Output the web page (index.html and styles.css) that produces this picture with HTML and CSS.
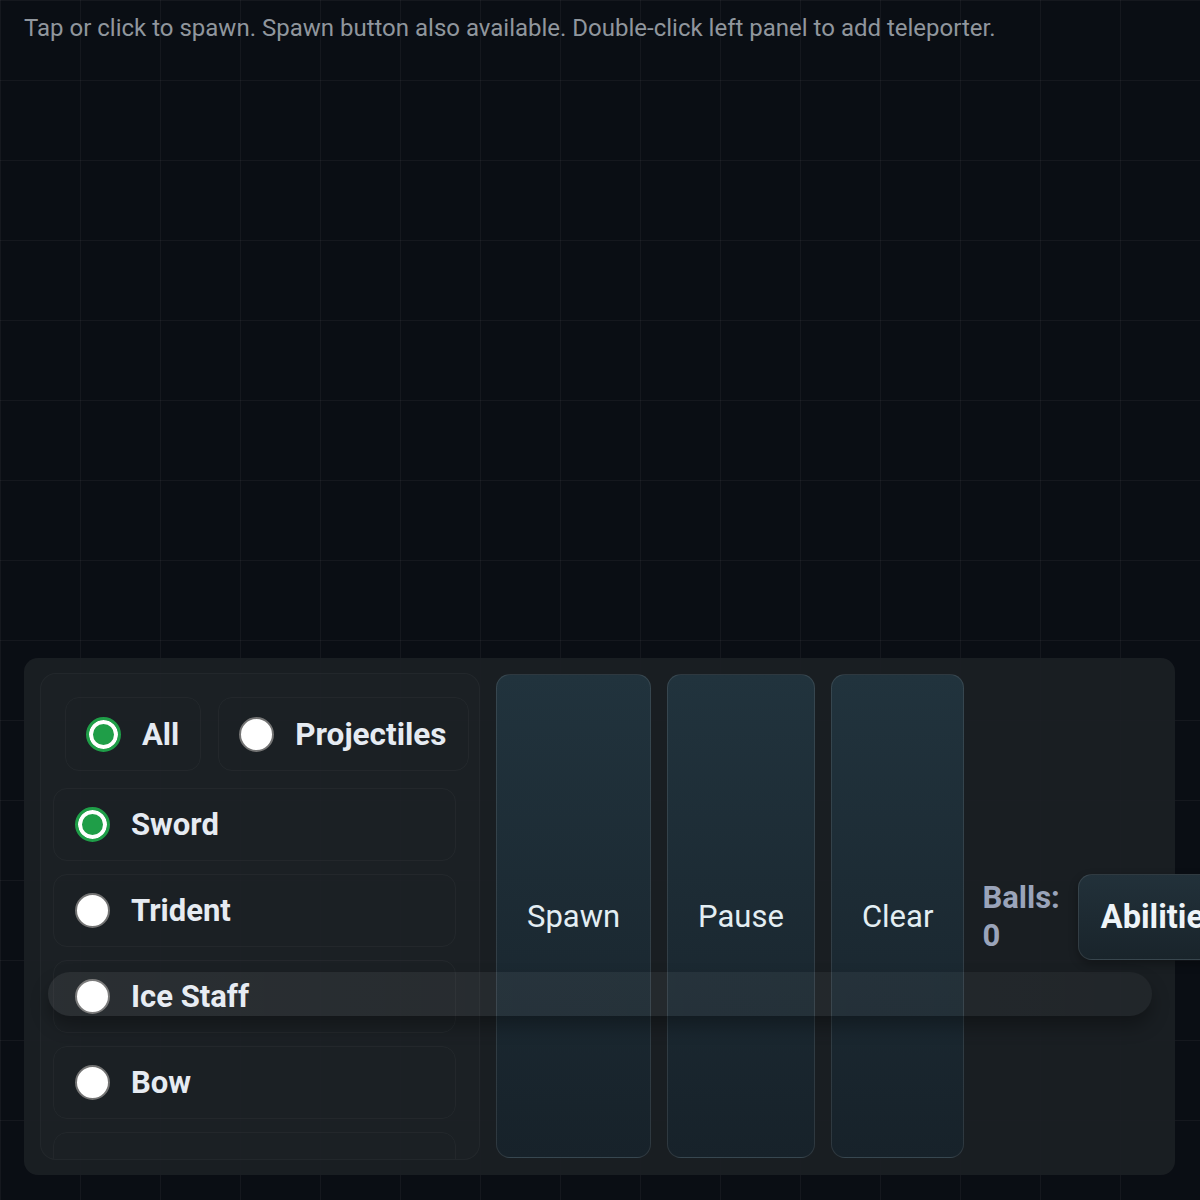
FILE: index.html
```html
<!DOCTYPE html>
<html>
<head>
    <meta charset="utf-8">
    <title>Ball Arena</title>
    <meta name="viewport" content="width=device-width, initial-scale=1">
    <link rel="stylesheet" href="styles.css">
</head>
<body>
    <div id="app">
        <p id="hint">Tap or click to spawn. Spawn button also available. Double-click left panel to add teleporter.</p>

        <div id="controls">
            <div id="weapons">
                <div id="filters">
                    <label class="chip"><input type="radio" name="filter" checked> All</label>
                    <label class="chip"><input type="radio" name="filter"> Projectiles</label>
                </div>
                <label class="weapon"><input type="radio" name="weapon" checked> Sword</label>
                <label class="weapon"><input type="radio" name="weapon"> Trident</label>
                <label class="weapon"><input type="radio" name="weapon"> Ice Staff</label>
                <label class="weapon"><input type="radio" name="weapon"> Bow</label>
                <label class="weapon"></label>
            </div>

            <button class="action">Spawn</button>
            <button class="action">Pause</button>
            <button class="action">Clear</button>

            <p id="balls">Balls: <span id="count">0</span></p>
            <button id="abilities">Abilities</button>

            <!-- teleporter lane, sits over the row -->
            <div id="lane"></div>
        </div>
    </div>
</body>
</html>
```

FILE: styles.css
```css
*{
    margin: 0;
    box-sizing: border-box;
}
html, body{
    overflow: hidden;
}
body{
    background-color: #0a0e14;
    background-image:
        linear-gradient(to right, rgba(255,255,255,0.045) 1px, transparent 1px),
        linear-gradient(to bottom, rgba(255,255,255,0.045) 1px, transparent 1px);
    background-size: 80px 80px;
    font-family: Roboto, "Liberation Sans", sans-serif;
}
#app{
    height: 1200px;
    display: flex;
    flex-direction: column;
    padding: 0 25px 25px 24px;
}
#hint{
    padding-top: 13px;
    font-size: 24px;
    line-height: 30px;
    color: #90969d;
}
#controls{
    position: relative;
    margin-top: auto;
    height: 517px;
    display: flex;
    align-items: center;
    gap: 16px;
    padding: 15px 16px;
    border-radius: 14px;
    background: rgba(27, 32, 36, 0.92);
}

/* weapon picker */
#weapons{
    flex: none;
    align-self: stretch;
    width: 440px;
    padding: 12px;
    overflow: hidden;
    border: 1px solid rgba(255,255,255,0.035);
    border-radius: 16px;
    background: rgba(255,255,255,0.012);
}
#filters{
    display: flex;
    gap: 17px;
    margin: 11px 0 17px 12px;
}
.chip, .weapon{
    display: flex;
    align-items: center;
    gap: 21px;
    font-size: 31px;
    font-weight: 700;
    color: #e6ebf2;
    border: 1px solid rgba(255,255,255,0.035);
    border-radius: 14px;
}
.chip{
    height: 74px;
    padding: 0 21px 0 21px;
}
.chip:last-child{
    font-size: 31.5px;
}
.weapon{
    width: 403px;
    height: 73px;
    padding-left: 22px;
    margin-bottom: 13px;
}
input[type=radio]{
    appearance: none;
    flex: none;
    width: 35px;
    height: 35px;
    margin: 0 0 0 -1px;
    border: 2px solid #737373;
    border-radius: 50%;
    background: #fff;
}
input[type=radio]:checked{
    border: 3px solid #1f9e48;
    background: #1f9e48;
    box-shadow: inset 0 0 0 4px #fff;
}

/* big buttons */
.action{
    flex: none;
    align-self: stretch;
    margin: 1px 0 2px;
    padding: 0 30px;
    font-family: Roboto, "Liberation Sans", sans-serif;
    font-size: 31px;
    color: #e3eef3;
    border: 1px solid rgba(255,255,255,0.1);
    border-radius: 14px;
    background: linear-gradient(#21333d, #17222a);
}
#balls{
    flex: 0 1 auto;
    margin-left: 2px;
    font-size: 31px;
    font-weight: 700;
    line-height: 38px;
    color: #9aa4ba;
}
#abilities{
    flex: none;
    height: 86px;
    margin-left: 2px;
    padding: 0 22px;
    font-family: Roboto, "Liberation Sans", sans-serif;
    font-size: 32.5px;
    font-weight: 700;
    color: #eef4f8;
    border: 1px solid rgba(255,255,255,0.1);
    border-radius: 14px;
    background: linear-gradient(#22313a, #19242b);
    box-shadow: 0 4px 10px rgba(0,0,0,0.3);
}
#lane{
    position: absolute;
    left: 24px;
    top: 314px;
    width: 1104px;
    height: 44px;
    border-radius: 22px;
    background: linear-gradient(to right, rgba(255,255,255,0.065), rgba(255,255,255,0.035));
    box-shadow: 0 10px 18px rgba(0,0,0,0.3);
}
```
